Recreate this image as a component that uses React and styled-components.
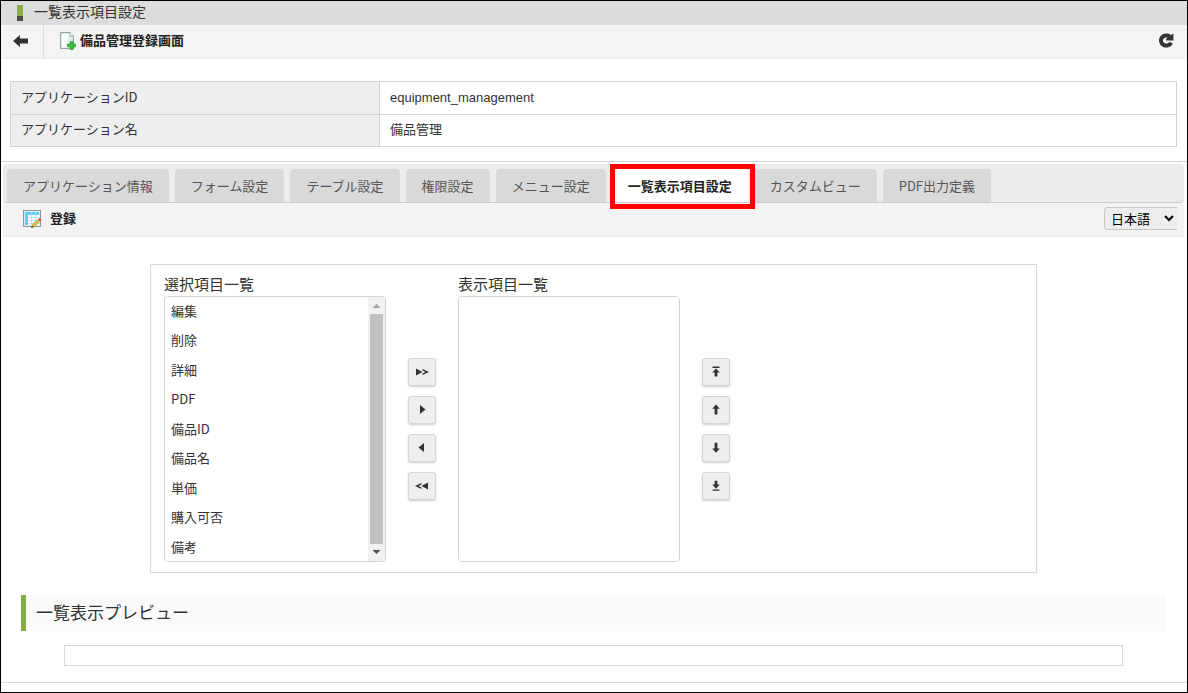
import React, { useState } from "react";
import styled, { createGlobalStyle } from "styled-components";

const tabs = [
  "アプリケーション情報",
  "フォーム設定",
  "テーブル設定",
  "権限設定",
  "メニュー設定",
  "一覧表示項目設定",
  "カスタムビュー",
  "PDF出力定義",
];

const fields = [
  "編集",
  "削除",
  "詳細",
  "PDF",
  "備品ID",
  "備品名",
  "単価",
  "購入可否",
  "備考",
];

const moveIcons = [
  { label: "すべて追加", d: "M1 3.5L7.5 7L1 10.5ZM7.5 4L14 7L7.5 10V8.5L10.5 7L7.5 5.5Z" },
  { label: "追加", d: "M5 2L10.5 6.5L5 11Z" },
  { label: "解除", d: "M9 2L3.5 6.5L9 11Z" },
  { label: "すべて解除", d: "M13 3.5L6.5 7L13 10.5ZM6.5 4L0 7L6.5 10V8.5L3.5 7L6.5 5.5Z" },
];

const orderIcons = [
  { label: "先頭へ", d: "M3.5 1.5H10.5V2.9H3.5ZM7 3.4L10.8 7.6H8.4V11.5H5.6V7.6H3.2Z" },
  { label: "上へ", d: "M7 1.5L10.8 5.8H8.4V11.5H5.6V5.8H3.2Z" },
  { label: "下へ", d: "M7 11.8L3.2 7.5H5.6V1.8H8.4V7.5H10.8Z" },
  { label: "末尾へ", d: "M3.5 10.4H10.5V11.8H3.5ZM7 9.8L3.2 5.6H5.6V1.7H8.4V5.6H10.8Z" },
];

const BackIcon = () => (
  <svg width="15" height="14" viewBox="0 0 15 14" aria-hidden="true">
    <path d="M0 7L7 1V4.6H15V9.4H7V13Z" fill="#333" />
  </svg>
);

const ReloadIcon = () => (
  <svg width="16" height="15" viewBox="0 0 16 15" aria-hidden="true">
    <path
      d="M13.2 9.8A5.4 5.1 0 1 1 11.6 3.4"
      fill="none"
      stroke="#333"
      strokeWidth="4"
    />
    <path d="M15.4 0.6V7.6H8.2V6L10 4Z" fill="#333" />
  </svg>
);

const NewPageIcon = () => (
  <svg width="16" height="18" viewBox="0 0 16 18" aria-hidden="true">
    <path d="M0.5 0.5H10L13.5 4V16.5H0.5Z" fill="#dfeaec" stroke="#8fa3a8" />
    <path d="M2 2H9L6 15H2Z" fill="#fbffff" />
    <path d="M10 0.5V4H13.5" fill="#fff" stroke="#8fa3a8" />
    <path
      d="M10.2 9.5H13.2V12H15.7V15H13.2V17.5H10.2V15H7.7V12H10.2Z"
      fill="#36c13b"
      stroke="#1f9c2c"
      strokeWidth="0.6"
    />
  </svg>
);

const EditTableIcon = () => (
  <svg width="19" height="18" viewBox="0 0 19 18" aria-hidden="true">
    <rect x="0.5" y="0.5" width="17" height="16" fill="#e4eff1" stroke="#87989c" />
    <rect x="2" y="2" width="14" height="13" fill="#5cd0fa" />
    <rect x="5" y="5" width="11" height="10" fill="#fff" />
    <path
      d="M5 7.5H16M5 10.5H16M5 13.5H16M8.5 2V15M12.5 2V15"
      stroke="#a8def5"
      strokeWidth="0.8"
    />
    <path d="M8.5 17.5L9.5 14.5L15 9.5L17 11.5L11.5 16.5Z" fill="#e2c545" stroke="#a88a2b" strokeWidth="0.6" />
    <path d="M14.8 9.2L16.4 7.8L18.8 9.8L17.2 11.4Z" fill="#e05a52" />
    <path d="M8.2 17.8L9 15.8L10.4 17.2Z" fill="#222" />
  </svg>
);

const App = () => {
  const [active, setActive] = useState(5);

  return (
    <>
      <GlobalStyle />
      <Page>
        <TitleBar>
          <Marker />
          <h1>一覧表示項目設定</h1>
        </TitleBar>
        <Toolbar>
          <BackButton type="button" aria-label="戻る">
            <BackIcon />
          </BackButton>
          <ToolButton type="button">
            <NewPageIcon />
            <span>備品管理登録画面</span>
          </ToolButton>
          <ReloadButton type="button" aria-label="再読み込み">
            <ReloadIcon />
          </ReloadButton>
        </Toolbar>

        <Summary>
          <InfoTable>
            <tbody>
              <tr>
                <th scope="row">アプリケーションID</th>
                <td>equipment_management</td>
              </tr>
              <tr>
                <th scope="row">アプリケーション名</th>
                <td>備品管理</td>
              </tr>
            </tbody>
          </InfoTable>
        </Summary>

        <Content>
          <TabBar role="tablist">
            {tabs.map((name, i) => (
              <Tab
                key={name}
                type="button"
                role="tab"
                aria-selected={i === active}
                $active={i === active}
                onClick={() => setActive(i)}
              >
                {name}
              </Tab>
            ))}
          </TabBar>
          <ActionBar>
            <ToolButton type="button" $wide>
              <EditTableIcon />
              <span>登録</span>
            </ToolButton>
            <Language aria-label="言語" defaultValue="ja">
              <option value="ja">日本語</option>
              <option value="en">英語</option>
            </Language>
          </ActionBar>

          <Picker>
            <ListGroup>
              <label htmlFor="source">選択項目一覧</label>
              <ListFrame>
                <List id="source" multiple>
                  {fields.map((field) => (
                    <option key={field}>{field}</option>
                  ))}
                </List>
                <ScrollTrack aria-hidden="true">
                  <Arrow $color="#a3a3a3" viewBox="0 0 17 17">
                    <path d="M4.5 11L8.5 7L12.5 11Z" />
                  </Arrow>
                  <ScrollThumb />
                  <Arrow $color="#505050" viewBox="0 0 17 17">
                    <path d="M4.5 6L8.5 10L12.5 6Z" />
                  </Arrow>
                </ScrollTrack>
              </ListFrame>
            </ListGroup>
            <ButtonColumn>
              {moveIcons.map(({ label, d }) => (
                <IconButton key={label} type="button" aria-label={label}>
                  <svg width="14" height="14" viewBox="0 0 14 14">
                    <path d={d} />
                  </svg>
                </IconButton>
              ))}
            </ButtonColumn>
            <ListGroup>
              <label htmlFor="shown">表示項目一覧</label>
              <ListFrame>
                <List id="shown" multiple />
              </ListFrame>
            </ListGroup>
            <ButtonColumn>
              {orderIcons.map(({ label, d }) => (
                <IconButton key={label} type="button" aria-label={label}>
                  <svg width="14" height="14" viewBox="0 0 14 14">
                    <path d={d} />
                  </svg>
                </IconButton>
              ))}
            </ButtonColumn>
          </Picker>

          <PreviewTitle>一覧表示プレビュー</PreviewTitle>
          <PreviewBox />
        </Content>
      </Page>
    </>
  );
};

const GlobalStyle = createGlobalStyle`
  * {
    box-sizing: border-box;
  }
  body {
    margin: 0;
    background: #fff;
    color: #333;
    font-family: "Noto Sans CJK JP", sans-serif;
    font-size: 13px;
    line-height: 20px;
  }
  button,
  select {
    font: inherit;
    color: inherit;
  }
  h1,
  h2 {
    margin: 0;
    font-weight: 400;
  }
`;

const Page = styled.div`
  min-height: 100vh;
  border: 1px solid #000;
`;

const TitleBar = styled.header`
  display: flex;
  align-items: center;
  gap: 11px;
  height: 24px;
  padding-left: 16px;
  background: #dcdcdc;
  h1 {
    padding-bottom: 4px;
    font-size: 14px;
    line-height: 20px;
  }
`;

const Marker = styled.span`
  width: 6px;
  height: 16px;
  background: linear-gradient(#8ab04e 11px, #4b5040 11px);
`;

const Toolbar = styled.div`
  display: flex;
  height: 34px;
  background: #f4f4f4;
  border-bottom: 1px solid #ebebeb;
`;

const PlainButton = styled.button`
  display: flex;
  align-items: center;
  border: 0;
  padding: 0 0 2px;
  background: none;
  cursor: pointer;
`;

const BackButton = styled(PlainButton)`
  justify-content: center;
  width: 43px;
  padding-right: 4px;
  border-right: 1px solid #ddd;
`;

const ToolButton = styled(PlainButton)`
  gap: ${(p) => (p.$wide ? "8px" : "4px")};
  margin-left: ${(p) => (p.$wide ? "20px" : "16px")};
  padding-bottom: ${(p) => (p.$wide ? "0" : "2px")};
  color: #222;
  font-weight: 700;
  span {
    padding-bottom: 2px;
  }
`;

const ReloadButton = styled(PlainButton)`
  margin-left: auto;
  margin-right: 13px;
`;

const Summary = styled.section`
  padding: 22px 10px 14px 9px;
  border-bottom: 1px solid #d3d3d3;
`;

const InfoTable = styled.table`
  width: 100%;
  table-layout: fixed;
  border-collapse: collapse;
  th,
  td {
    height: 32px;
    padding: 0 10px 3px;
    border: 1px solid #d3d3d3;
    text-align: left;
    font-weight: 400;
  }
  tr:first-child th {
    height: 33px;
  }
  th {
    width: 369px;
    background: #eee;
  }
  td {
    padding-bottom: 1px;
    font-family: "Liberation Sans", "Noto Sans CJK JP", sans-serif;
  }
`;

const Content = styled.main`
  padding: 2px 3px 16px 2px;
  border-bottom: 1px solid #d9d9d9;
`;

const TabBar = styled.div`
  display: flex;
  gap: 6px;
  padding: 5px 4px 0;
  background: #ececec;
  border-bottom: 1px solid #ccc;
  border-radius: 4px;
`;

const Tab = styled.button`
  position: relative;
  z-index: ${(p) => (p.$active ? 1 : 0)};
  height: 33px;
  padding: 0 16px;
  border: 0;
  border-radius: 4px 4px 0 0;
  background: ${(p) => (p.$active ? "#fff" : "#d9d9d9")};
  color: ${(p) => (p.$active ? "#222" : "#555")};
  font-weight: ${(p) => (p.$active ? 700 : 400)};
  white-space: nowrap;
  cursor: pointer;

  /* frame drawn over the tab bar round the current tab */
  &::after {
    content: "";
    display: ${(p) => (p.$active ? "block" : "none")};
    position: absolute;
    inset: -5px -7px -7px -2px;
    border: 5px solid #f00;
  }
`;

const ActionBar = styled.div`
  display: flex;
  align-items: center;
  justify-content: space-between;
  height: 34px;
  padding: 0 7px 2px 0;
  background: #f3f3f3;
  border-bottom: 1px solid #ebebeb;
`;

const Language = styled.select`
  width: 73px;
  height: 23px;
  padding: 0 0 2px 2px;
  border: 1px solid #c5c5c5;
  border-right: 0;
  border-radius: 4px 0 0 4px;
  background: #ededed;
  color: #000;
`;

const Picker = styled.section`
  display: flex;
  gap: 22px;
  margin: 27px 147px 22px;
  padding: 9px 13px 10px;
  border: 1px solid #d9d9d9;
`;

const ListGroup = styled.div`
  width: 222px;
  label {
    display: block;
    padding-bottom: 2px;
    font-size: 15px;
    line-height: 20px;
  }
`;

const ListFrame = styled.div`
  display: flex;
  height: 266px;
  border: 1px solid #d3d3d3;
  border-radius: 4px;
  overflow: hidden;
`;

const List = styled.select`
  flex: 1;
  min-width: 0;
  padding: 0;
  border: 0;
  outline: 0;
  background: #fff;
  overflow: hidden;
  option {
    height: 29px;
    padding: 4px 6px;
    line-height: 20px;
  }
  option:nth-child(even) {
    height: 30px;
  }
`;

const ScrollTrack = styled.div`
  display: flex;
  flex-direction: column;
  width: 17px;
  background: #f1f1f1;
`;

const ScrollThumb = styled.div`
  flex: 1;
  margin: 0 2px;
  background: #c1c1c1;
`;

const Arrow = styled.svg`
  width: 17px;
  height: 17px;
  fill: ${(p) => p.$color};
`;

const ButtonColumn = styled.div`
  display: flex;
  flex-direction: column;
  gap: 10px;
  padding-top: 84px;
`;

const IconButton = styled.button`
  display: flex;
  align-items: center;
  justify-content: center;
  width: 28px;
  height: 28px;
  padding: 0;
  border: 1px solid #d5d5d5;
  border-radius: 3px;
  background: #eee;
  box-shadow: 0 1px 2px rgba(0, 0, 0, 0.2);
  fill: #333;
  cursor: pointer;
`;

const PreviewTitle = styled.h2`
  margin: 0 18px 14px;
  padding: 0 0 2px 10px;
  border-left: 5px solid #83ad47;
  background: #fafafa;
  font-size: 17px;
  line-height: 34px;
`;

const PreviewBox = styled.div`
  height: 21px;
  margin: 0 61px;
  border: 1px solid #d9d9d9;
`;

export default App;
